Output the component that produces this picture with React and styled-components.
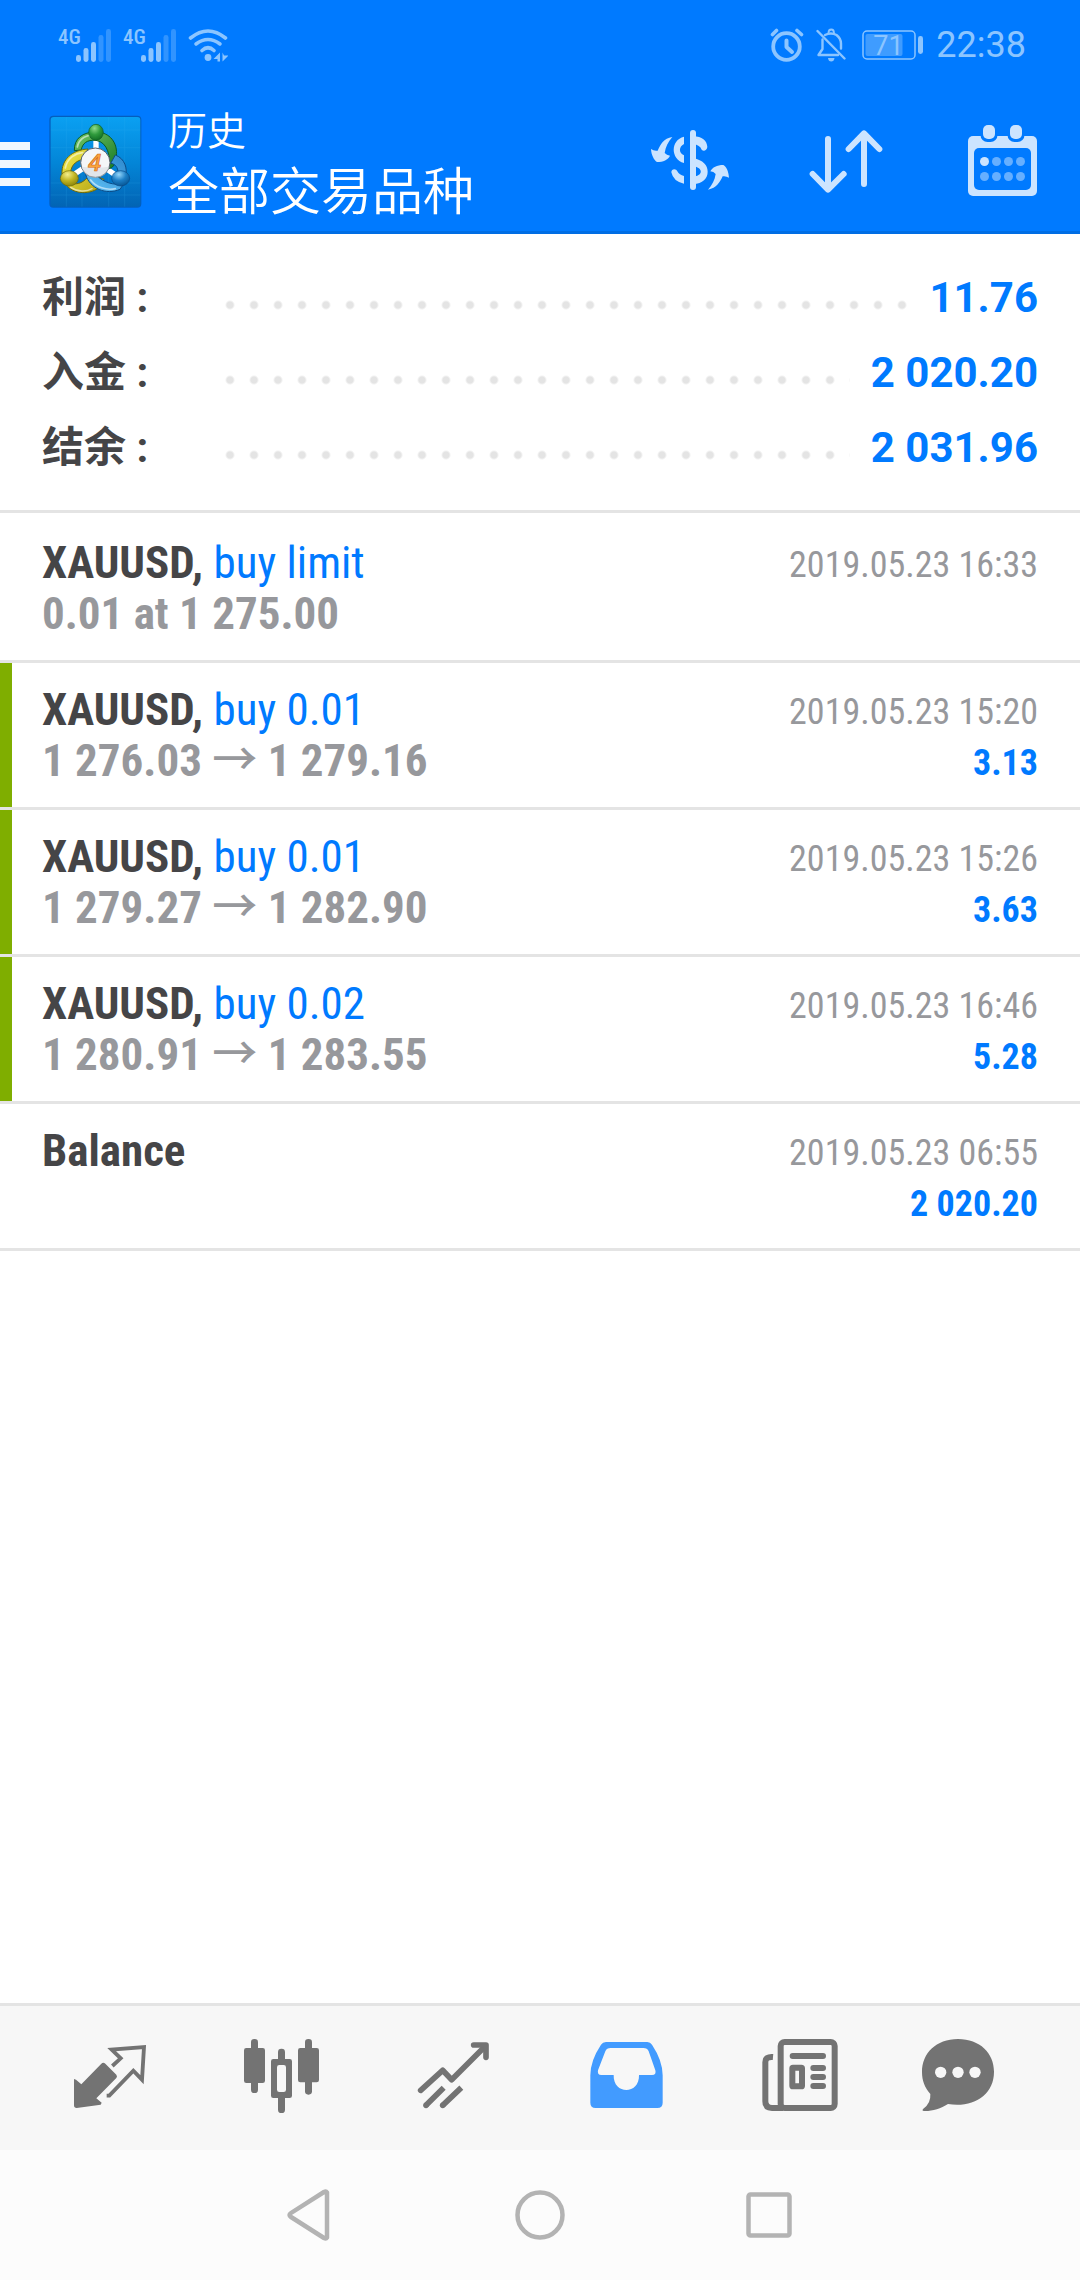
import React from "react";
import styled, { createGlobalStyle } from "styled-components";

const color = {
  brand: "#007aff",
  brandEdge: "#006de4",
  headerIcon: "#cce4ff",
  status: "#8cc5ff",
  ink: "#454547",
  muted: "#97989c",
  line: "#e4e4e4",
  profit: "#7fae00",
  nav: "#f7f7f7",
  navIcon: "#737373",
  navActive: "#429bff",
  system: "#fcfcfc",
  systemIcon: "#b3b3b3",
};

const sans = `Roboto, "Noto Sans CJK SC", sans-serif`;
const condensed = `"Roboto Condensed", Roboto, "Noto Sans CJK SC", sans-serif`;
const chinese = `"Noto Sans CJK SC", sans-serif`;

const GlobalStyle = createGlobalStyle`
  *, *::before, *::after { box-sizing: border-box; }
  body { margin: 0; background: #fff; font-family: ${sans}; }
  button { margin: 0; padding: 0; border: 0; background: none; color: inherit; font: inherit; cursor: pointer; }
  svg { display: block; flex: none; }
`;

const Page = styled.div`
  display: flex;
  flex-direction: column;
  min-height: 100vh;
`;

/* ---------- status bar ---------- */

const StatusBar = styled.div`
  display: flex;
  align-items: center;
  justify-content: space-between;
  height: 90px;
  padding: 0 54px 0 58px;
  background: ${color.brand};
  color: ${color.status};
`;

const StatusGroup = styled.div`
  display: flex;
  align-items: center;
  gap: 12px;
`;

const Signal = styled.div`
  display: flex;
  align-items: flex-start;
`;

const Network = styled.span`
  width: 18px;
  font: 500 21px/16px ${condensed};
`;

const Clock = styled.time`
  font-size: 36px;
  line-height: 42px;
`;

/* ---------- app bar ---------- */

const AppBar = styled.header`
  display: flex;
  align-items: center;
  height: 144px;
  border-bottom: 3px solid ${color.brandEdge};
  background: ${color.brand};
  color: #fff;
`;

const MenuButton = styled.button`
  display: flex;
  align-items: center;
  gap: 18px;
`;

const Titles = styled.div`
  flex: 1;
  padding-left: 24px;
  font-family: ${chinese};
  font-weight: 350;
`;

const Title = styled.h1`
  margin: 0;
  font-size: 39px;
  font-weight: inherit;
  line-height: 54px;
`;

const Subtitle = styled.p`
  margin: 0;
  font-size: 51px;
  line-height: 66px;
`;

const BarButton = styled.button`
  display: grid;
  place-items: center;
  width: 156px;
  height: 100%;
  color: ${color.headerIcon};
`;

/* ---------- account summary ---------- */

const Content = styled.main`
  flex: 1;
`;

const Summary = styled.dl`
  margin: 0;
  padding: 26px 42px 25px;
  border-bottom: 3px solid ${color.line};
`;

const SummaryRow = styled.div`
  display: flex;
  align-items: center;
  font-size: 42px;
  line-height: 75px;
`;

const SummaryLabel = styled.dt`
  width: 176px;
  color: ${color.ink};
  font-weight: 700;
`;

const Leader = styled.span`
  flex: 1;
  height: 24px;
  margin: 14px 21px 0 0;
  background: radial-gradient(circle at 12px 12px, ${color.line} 3px, transparent 5px) 0 0 / 24px 24px repeat-x;
`;

const SummaryValue = styled.dd`
  margin: 0;
  color: ${color.brand};
  font-weight: 700;
`;

/* ---------- deals ---------- */

const Deals = styled.ul`
  margin: 0;
  padding: 3px 0 0;
  list-style: none;
`;

const Deal = styled.li`
  display: flex;
  justify-content: space-between;
  padding: 21px 42px;
  border-bottom: 3px solid ${color.line};
  background: ${(p) => (p.$profit ? `linear-gradient(${color.profit}, ${color.profit}) 0 0 / 12px 100% no-repeat` : "none")};
  font-family: ${condensed};
  line-height: 51px;
`;

const DealMain = styled.div`
  font-size: 45px;
  font-weight: 700;
`;

const DealTitle = styled.div`
  color: ${color.ink};
`;

const Side = styled.span`
  display: inline-block;
  color: ${color.brand};
  font-weight: 400;
`;

const Prices = styled.div`
  color: ${color.muted};
`;

const Arrow = styled.span`
  display: inline-block;
  font-weight: 500;
`;

const DealSide = styled.div`
  padding-top: 3px;
  font-size: 36px;
  text-align: right;
`;

const DealTime = styled.time`
  display: block;
  color: ${color.muted};
`;

const Amount = styled.div`
  height: 48px;
  color: ${color.brand};
  font-weight: 700;
`;

/* ---------- bottom bars ---------- */

const TabBar = styled.nav`
  display: grid;
  grid-template-columns: repeat(5, 172fr) 148fr;
  padding: 0 48px 0 24px;
  border-top: 3px solid ${color.line};
  background: ${color.nav};
`;

const Tab = styled.button`
  display: grid;
  place-items: center;
  height: 144px;
  color: ${(p) => (p.$active ? color.navActive : color.navIcon)};
`;

const SystemBar = styled.div`
  display: flex;
  align-items: center;
  justify-content: center;
  gap: 170px;
  height: 130px;
  background: ${color.system};
  color: ${color.systemIcon};
`;

const SystemButton = styled.button`
  display: block;
`;

/* ---------- status icons ---------- */

const SignalBars = () => (
  <svg width="35" height="33" viewBox="0 0 35 33" fill="currentColor" aria-hidden="true">
    <rect x="0" y="26" width="5" height="7" rx="2.4" />
    <rect x="7.5" y="19" width="5" height="14" rx="2.4" />
    <rect x="15" y="13" width="5" height="20" rx="2.4" />
    <rect x="22.5" y="6" width="5" height="27" rx="2.4" opacity="0.35" />
    <rect x="30" y="0" width="5" height="33" rx="2.4" opacity="0.35" />
  </svg>
);

const Wifi = () => (
  <svg width="40" height="33" viewBox="187 28.5 40 33" fill="none" stroke="currentColor" strokeWidth="3.6" strokeLinecap="round" aria-hidden="true">
    <path d="M189.5 37.5Q207 23.5 224.5 37.5" />
    <path d="M195 43.5Q207 34.5 219 43.5" />
    <path d="M201 50Q207 44.5 213 50" />
    <circle cx="207" cy="57" r="3.4" fill="currentColor" stroke="none" />
    <path d="M219 52V61H216.5V58.5H212.5ZM221.5 61V52L223 55H227.5Z" fill="currentColor" stroke="none" />
  </svg>
);

const Alarm = () => (
  <svg width="34" height="34" viewBox="772 28.5 34 34" fill="none" stroke="currentColor" strokeLinecap="round" strokeLinejoin="round" aria-hidden="true">
    <circle cx="788.5" cy="47" r="13.3" strokeWidth="3.8" />
    <path d="M788.5 41V47.5L794 52.5" strokeWidth="4" />
    <path d="M774.5 35L778.5 31M799 31L803.5 35" strokeWidth="3.6" />
  </svg>
);

const BellOff = () => (
  <svg width="30" height="34" viewBox="818 28.5 30 34" fill="none" stroke="currentColor" strokeWidth="2.4" strokeLinecap="round" strokeLinejoin="round" aria-hidden="true">
    <path d="M819.5 31.5L846.5 59" />
    <path d="M824.5 40V49.5L820.5 55.5H840" />
    <path d="M827 35.5Q833 32.5 838.5 35.5Q843 39 843 44V49" />
    <path d="M830.5 33.5Q830.5 30 833.2 30Q836 30 836 33.5" strokeWidth="1.8" />
    <path d="M830 58.5H836.5Q836 62 833.2 62Q830.5 62 830 58.5Z" fill="currentColor" stroke="none" />
  </svg>
);

const Battery = () => (
  <svg width="66" height="30" viewBox="-4 0 66 30" fill="currentColor" aria-label="71">
    <rect x="1" y="1" width="52" height="28" rx="4" fill="none" stroke="currentColor" strokeWidth="1.5" />
    <rect x="3.5" y="4" width="37" height="22" rx="2" opacity="0.45" />
    <rect x="56" y="6" width="5" height="18" rx="2.4" />
    <text x="26.5" y="24.5" textAnchor="middle" fontFamily="Roboto, sans-serif" fontSize="27">71</text>
  </svg>
);

/* ---------- app bar icons ---------- */

const MenuLines = () => (
  <svg width="30" height="53" viewBox="0 134 30 53" fill="#f0f7ff" aria-hidden="true">
    <rect y="142" width="30" height="8" />
    <rect y="160" width="30" height="8" />
    <rect y="178" width="30" height="8" />
  </svg>
);

const Logo = () => (
  <svg width="96" height="95" viewBox="24 39 288 285" aria-hidden="true">
    <defs>
      <linearGradient id="tile" x1="0" y1="0" x2="0" y2="1">
        <stop offset="0" stopColor="#0aa0f2" />
        <stop offset="0.5" stopColor="#0386d8" />
        <stop offset="1" stopColor="#0264b4" />
      </linearGradient>
      <linearGradient id="green" x1="0" y1="0" x2="1" y2="1">
        <stop offset="0" stopColor="#74c766" />
        <stop offset="1" stopColor="#187a26" />
      </linearGradient>
      <linearGradient id="yellow" x1="0" y1="0" x2="1" y2="1">
        <stop offset="0" stopColor="#f3ec4e" />
        <stop offset="1" stopColor="#b3a212" />
      </linearGradient>
      <linearGradient id="blue" x1="1" y1="0" x2="0" y2="1">
        <stop offset="0" stopColor="#2b86cc" />
        <stop offset="1" stopColor="#62c4f8" />
      </linearGradient>
      <radialGradient id="greenHead" cx="0.4" cy="0.25" r="0.8">
        <stop offset="0" stopColor="#8fdc8a" />
        <stop offset="0.5" stopColor="#2f9a3c" />
        <stop offset="1" stopColor="#0f6a22" />
      </radialGradient>
      <radialGradient id="yellowHead" cx="0.4" cy="0.25" r="0.8">
        <stop offset="0" stopColor="#f4ee8c" />
        <stop offset="0.5" stopColor="#c2b522" />
        <stop offset="1" stopColor="#85800c" />
      </radialGradient>
      <radialGradient id="blueHead" cx="0.4" cy="0.25" r="0.8">
        <stop offset="0" stopColor="#94d6fa" />
        <stop offset="0.5" stopColor="#1d7fc6" />
        <stop offset="1" stopColor="#05528f" />
      </radialGradient>
    </defs>
    <rect x="28" y="47" width="276" height="276" rx="12" fill="#0555a8" opacity="0.75" />
    <rect x="32" y="51" width="269" height="269" rx="9" fill="url(#tile)" />
    <path d="M32 90H301M32 143H301M32 249H301M32 285H301M79 51V320M126 51V320M206 51V320M254 51V320" stroke="#3bb4f5" strokeWidth="2" opacity="0.25" />
    <g stroke="#fff" strokeWidth="16" strokeLinecap="round">
      <path d="M168 110V150M100 225L128 206M226 225L202 208" />
    </g>
    <path d="M103 152C102 115 128 96 168 96C210 96 234 130 229 168C226 196 216 206 207 205C212 170 204 127 168 121C140 118 126 132 124 150Z" fill="url(#green)" stroke="#0d5c24" strokeWidth="3" />
    <path d="M144 147C96 150 64 178 66 222L92 226C90 200 104 184 128 178ZM74 248C96 286 156 286 182 258L192 238L150 222C132 250 112 254 96 250Z" fill="url(#yellow)" stroke="#716a08" strokeWidth="3" />
    <path d="M226 165C256 176 262 208 257 224L234 218C234 202 226 192 212 190ZM137 224C150 266 198 286 240 268L252 250C220 258 190 246 172 228Z" fill="url(#blue)" stroke="#0b4c88" strokeWidth="3" />
    <path d="M112 141C118 112 144 104 162 106M76 204C82 172 108 160 128 158M152 240C168 262 200 272 226 266M92 262C112 276 140 276 156 266" fill="none" stroke="#fff" strokeWidth="5" strokeLinecap="round" opacity="0.55" />
    <ellipse cx="168" cy="97" rx="22" ry="24" fill="url(#greenHead)" stroke="#0d5c24" strokeWidth="2" />
    <ellipse cx="88" cy="235" rx="27" ry="23" fill="url(#yellowHead)" stroke="#716a08" strokeWidth="2" />
    <ellipse cx="242" cy="235" rx="27" ry="23" fill="url(#blueHead)" stroke="#0b4c88" strokeWidth="2" />
    <circle cx="166" cy="188" r="44" fill="#f4f6f8" stroke="#55606a" strokeWidth="3" />
    <path d="M124 200A43 43 0 0 0 208 200Q170 206 124 200Z" fill="#cfd6dc" opacity="0.5" />
    <text x="164" y="213" textAnchor="middle" fontFamily="'Open Sans', sans-serif" fontSize="70" fontStyle="italic" fontWeight="600" fill="#fba63c" stroke="#d2641a" strokeWidth="2">4</text>
  </svg>
);

const Currency = () => (
  <svg width="82" height="81" viewBox="27 30 246 243" fill="currentColor" aria-hidden="true">
    <rect x="150" y="60" width="18" height="180" rx="9" />
    <path d="M132 80C91 90 91 147 132 159V136C116 129 116 110 132 102Z" />
    <path d="M132 198Q118 195 112 184C109 175 94 175 94 187Q100 215 132 221Z" />
    <path d="M160 79C186 79 201 92 202 111C200 123 190 125 185 119Q180 105 160 102Z" />
    <path d="M160 145C189 150 203 166 203 185C203 205 188 221 160 222V200C190 198 190 173 160 169Z" />
    <path d="M97 81C71 85 61 104 53 122Q42 124 33 117C34 136 42 150 51 156C70 156 84 149 90 137Q80 136 74 129C77 110 84 96 97 81Z" />
    <path d="M204 239C230 235 240 216 248 199Q257 197 267 203C266 184 259 170 250 165C231 165 217 172 211 184Q221 185 227 192C224 211 217 224 204 239Z" />
  </svg>
);

const Sort = () => (
  <svg width="82" height="81" viewBox="495 30 246 243" fill="none" stroke="currentColor" strokeWidth="18" strokeLinecap="round" strokeLinejoin="round" aria-hidden="true">
    <path d="M564 87V238M518 192L564 239L611 192" />
    <path d="M672 222V72M626 117L672 70L718 117" />
  </svg>
);

const Calendar = () => (
  <svg width="82" height="81" viewBox="961 120 82 81" fill="currentColor" aria-hidden="true">
    <rect x="968" y="136" width="69" height="60" rx="5" />
    <rect x="974" y="148" width="57" height="42" rx="5" fill={color.brand} />
    <rect x="980.5" y="123" width="17" height="19" rx="7" fill={color.brand} />
    <rect x="1007.5" y="123" width="17" height="19" rx="7" fill={color.brand} />
    <rect x="983" y="125" width="12" height="14" rx="5" />
    <rect x="1010" y="125" width="12" height="14" rx="5" />
    <circle cx="984.5" cy="161.5" r="4.5" />
    <g fill="#66afff">
      <circle cx="996.5" cy="161.5" r="4.5" />
      <circle cx="1008.5" cy="161.5" r="4.5" />
      <circle cx="1020.5" cy="161.5" r="4.5" />
      <circle cx="984.5" cy="176.5" r="4.5" />
      <circle cx="996.5" cy="176.5" r="4.5" />
      <circle cx="1008.5" cy="176.5" r="4.5" />
      <circle cx="1020.5" cy="176.5" r="4.5" />
    </g>
  </svg>
);

/* ---------- tab icons ---------- */

const TabIcon = ({ x, children }) => (
  <svg width="84" height="84" viewBox={`${x} 18 252 252`} fill="currentColor" aria-hidden="true">
    {children}
  </svg>
);

const Quotes = () => (
  <TabIcon x={24}>
    <path d="M42 147L48 149L64 163L124 101Q130 96 136 101L169 134Q173 139 169 144L109 205L125 218L122 224L50 234Q42 234 42 226Z" />
    <path d="M157 108L182 85L155 59L252 51L246 149L220 122L148 197H140" fill="none" stroke="currentColor" strokeWidth="11.5" />
  </TabIcon>
);

const Charts = () => (
  <TabIcon x={540}>
    <rect x="552" y="54" width="63" height="105" rx="7" />
    <rect x="573" y="27" width="21" height="162" rx="10" />
    <rect x="714" y="54" width="63" height="103" rx="7" />
    <rect x="735" y="27" width="21" height="167" rx="10" />
    <rect x="633" y="87" width="63" height="117" rx="7" />
    <rect x="654" y="56" width="21" height="193" rx="10" />
    <rect x="651" y="105" width="27" height="81" rx="7" fill={color.nav} />
  </TabIcon>
);

const Trade = () => (
  <TabIcon x={1056}>
    <g fill="none" stroke="currentColor" strokeWidth="17" strokeLinejoin="round">
      <path d="M1082 181L1148 121L1175 149L1274 50" strokeLinecap="round" />
      <path d="M1241 45H1278V82" strokeLinecap="round" />
      <path d="M1098 226L1151 173M1148 226L1204 173" />
    </g>
    <circle cx="1098" cy="226" r="8.5" />
    <circle cx="1148" cy="226" r="8.5" />
  </TabIcon>
);

const History = () => (
  <TabIcon x={12}>
    <path
      fillRule="evenodd"
      d="M78 36H202Q211 36 216 44Q248 92 248 136V218Q248 234 232 234H47Q31 234 31 218V136Q31 92 63 44Q68 36 78 36ZM92 54Q80 54 76 64L54 121Q51 135 64 135H101C99 195 179 195 177 135H216Q230 135 226 121L206 64Q202 54 190 54Z"
    />
  </TabIcon>
);

const News = () => (
  <TabIcon x={528}>
    <g fill="none" stroke="currentColor">
      <rect x="602" y="36" width="162" height="198" rx="12" strokeWidth="18" />
      <path d="M579 81Q556 79 556 97V214Q556 234 576 234H610" strokeWidth="18" />
      <rect x="637" y="113" width="29" height="56" rx="2" strokeWidth="18" />
      <path d="M638 78H729M700 114H729M700 141H729M700 168H729" strokeWidth="18" strokeLinecap="round" />
    </g>
  </TabIcon>
);

const Messages = () => (
  <TabIcon x={1008}>
    <path d="M1134 27C1200 27 1242 70 1242 125C1242 195 1180 234 1104 222C1082 236 1055 244 1032 243Q1024 242 1030 236Q1053 220 1051 192C1034 173 1026 152 1026 126C1026 70 1068 27 1134 27Z" />
    <g fill={color.nav}>
      <circle cx="1082" cy="127" r="17" />
      <circle cx="1134" cy="127" r="17" />
      <circle cx="1185" cy="127" r="17" />
    </g>
  </TabIcon>
);

/* ---------- system icons ---------- */

const SystemIcon = ({ children }) => (
  <svg width="60" height="60" viewBox="0 0 60 60" fill="none" stroke="currentColor" strokeWidth="4.5" strokeLinejoin="round" aria-hidden="true">
    {children}
  </svg>
);

/* ---------- data ---------- */

const summary = [
  ["利润", "11.76"],
  ["入金", "2 020.20"],
  ["结余", "2 031.96"],
];

const deals = [
  { symbol: "XAUUSD,", side: "buy limit", prices: ["0.01 at 1 275.00"], time: "2019.05.23 16:33" },
  { symbol: "XAUUSD,", side: "buy 0.01", prices: ["1 276.03", "1 279.16"], time: "2019.05.23 15:20", amount: "3.13", profit: true },
  { symbol: "XAUUSD,", side: "buy 0.01", prices: ["1 279.27", "1 282.90"], time: "2019.05.23 15:26", amount: "3.63", profit: true },
  { symbol: "XAUUSD,", side: "buy 0.02", prices: ["1 280.91", "1 283.55"], time: "2019.05.23 16:46", amount: "5.28", profit: true },
  { symbol: "Balance", time: "2019.05.23 06:55", amount: "2 020.20" },
];

const tabs = [
  ["行情", Quotes],
  ["图表", Charts],
  ["交易", Trade],
  ["历史", History],
  ["新闻", News],
  ["消息", Messages],
];

export default function App() {
  return (
    <Page>
      <GlobalStyle />
      <StatusBar>
        <StatusGroup>
          <Signal>
            <Network>4G</Network>
            <SignalBars />
          </Signal>
          <Signal>
            <Network>4G</Network>
            <SignalBars />
          </Signal>
          <Wifi />
        </StatusGroup>
        <StatusGroup>
          <Alarm />
          <BellOff />
          <Battery />
          <Clock>22:38</Clock>
        </StatusGroup>
      </StatusBar>

      <AppBar>
        <MenuButton aria-label="菜单">
          <MenuLines />
          <Logo />
        </MenuButton>
        <Titles>
          <Title>历史</Title>
          <Subtitle>全部交易品种</Subtitle>
        </Titles>
        <BarButton aria-label="交易品种">
          <Currency />
        </BarButton>
        <BarButton aria-label="排序">
          <Sort />
        </BarButton>
        <BarButton aria-label="日期">
          <Calendar />
        </BarButton>
      </AppBar>

      <Content>
        <Summary>
          {summary.map(([label, value]) => (
            <SummaryRow key={label}>
              <SummaryLabel>{label} :</SummaryLabel>
              <Leader />
              <SummaryValue>{value}</SummaryValue>
            </SummaryRow>
          ))}
        </Summary>
        <Deals>
          {deals.map((deal) => (
            <Deal key={deal.time} $profit={deal.profit}>
              <DealMain>
                <DealTitle>
                  {deal.symbol} {deal.side && <Side>{deal.side}</Side>}
                </DealTitle>
                {deal.prices && (
                  <Prices>
                    {deal.prices[0]}
                    {deal.prices[1] && (
                      <>
                        {" "}
                        <Arrow>→</Arrow> {deal.prices[1]}
                      </>
                    )}
                  </Prices>
                )}
              </DealMain>
              <DealSide>
                <DealTime>{deal.time}</DealTime>
                {deal.amount && <Amount>{deal.amount}</Amount>}
              </DealSide>
            </Deal>
          ))}
        </Deals>
      </Content>

      <TabBar>
        {tabs.map(([label, Icon]) => (
          <Tab key={label} aria-label={label} $active={label === "历史"}>
            <Icon />
          </Tab>
        ))}
      </TabBar>

      <SystemBar>
        <SystemButton aria-label="返回">
          <SystemIcon>
            <path d="M47 7.5V52.5Q46 54 44 53L11 32Q8 30 11 28L44 7Q46 6 47 7.5Z" />
          </SystemIcon>
        </SystemButton>
        <SystemButton aria-label="主屏幕">
          <SystemIcon>
            <circle cx="30" cy="30" r="22.5" />
          </SystemIcon>
        </SystemButton>
        <SystemButton aria-label="最近任务">
          <SystemIcon>
            <rect x="8.5" y="9.5" width="41" height="41" rx="2" />
          </SystemIcon>
        </SystemButton>
      </SystemBar>
    </Page>
  );
}
